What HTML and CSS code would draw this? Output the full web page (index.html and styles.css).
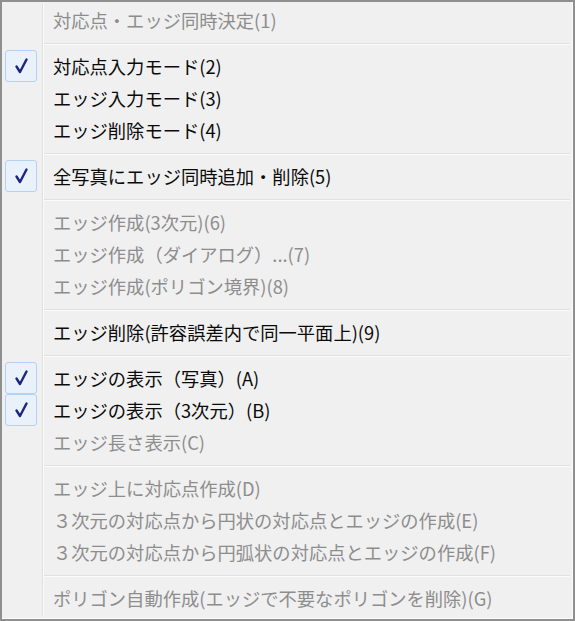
FILE: index.html
```html
<!DOCTYPE html>
<html lang="ja">
<head>
    <meta charset="UTF-8">
    <title>エッジメニュー</title>
    <link rel="stylesheet" href="styles.css">
</head>
<body>
    <div class="menu">
        <ul class="list">
            <li class="item disabled"><span class="mark"></span><span class="label">対応点・エッジ同時決定(1)</span></li>
            <li class="sep"></li>
            <li class="item"><span class="mark on"><svg viewBox="0 0 18 18"><path d="M3.5 9.5 L7 15 L13.5 2.5"/></svg></span><span class="label">対応点入力モード(2)</span></li>
            <li class="item"><span class="mark"></span><span class="label">エッジ入力モード(3)</span></li>
            <li class="item"><span class="mark"></span><span class="label">エッジ削除モード(4)</span></li>
            <li class="sep"></li>
            <li class="item"><span class="mark on"><svg viewBox="0 0 18 18"><path d="M3.5 9.5 L7 15 L13.5 2.5"/></svg></span><span class="label">全写真にエッジ同時追加・削除(5)</span></li>
            <li class="sep"></li>
            <li class="item disabled"><span class="mark"></span><span class="label">エッジ作成(3次元)(6)</span></li>
            <li class="item disabled"><span class="mark"></span><span class="label">エッジ作成（ダイアログ）...(7)</span></li>
            <li class="item disabled"><span class="mark"></span><span class="label">エッジ作成(ポリゴン境界)(8)</span></li>
            <li class="sep"></li>
            <li class="item"><span class="mark"></span><span class="label">エッジ削除(許容誤差内で同一平面上)(9)</span></li>
            <li class="sep"></li>
            <li class="item"><span class="mark on"><svg viewBox="0 0 18 18"><path d="M3.5 9.5 L7 15 L13.5 2.5"/></svg></span><span class="label">エッジの表示（写真）(A)</span></li>
            <li class="item"><span class="mark on"><svg viewBox="0 0 18 18"><path d="M3.5 9.5 L7 15 L13.5 2.5"/></svg></span><span class="label">エッジの表示（3次元）(B)</span></li>
            <li class="item disabled"><span class="mark"></span><span class="label">エッジ長さ表示(C)</span></li>
            <li class="sep"></li>
            <li class="item disabled"><span class="mark"></span><span class="label">エッジ上に対応点作成(D)</span></li>
            <li class="item disabled"><span class="mark"></span><span class="label">３次元の対応点から円状の対応点とエッジの作成(E)</span></li>
            <li class="item disabled"><span class="mark"></span><span class="label">３次元の対応点から円弧状の対応点とエッジの作成(F)</span></li>
            <li class="sep"></li>
            <li class="item disabled"><span class="mark"></span><span class="label">ポリゴン自動作成(エッジで不要なポリゴンを削除)(G)</span></li>
        </ul>
    </div>
</body>
</html>
```

FILE: styles.css
```css
html, body {
    margin: 0;
    padding: 0;
}
body {
    font-family: "Noto Sans CJK JP", "Noto Sans", sans-serif;
    font-size: 18.3px;
    color: #0a0a0a;
}
.menu {
    width: 575px;
    height: 621px;
    box-sizing: border-box;
    border: 2px solid #8f8f8f;
    box-shadow: inset -1px -1px 0 #fbfbfb;
    background: #f0f0f0;
    padding: 2px 3px 0 3px;
}
.list {
    list-style: none;
    margin: 0;
    padding: 0;
    /* 左の縦線（アイコン領域の区切り） */
    background: linear-gradient(to right, transparent 37px, #e0e0e0 37px, #e0e0e0 38px, #fbfbfb 38px, #fbfbfb 39px, transparent 39px);
    height: 612px;
}
.item {
    display: flex;
    align-items: center;
    height: 32px;
}
.item.disabled {
    color: #8d8d8d;
}
.mark {
    width: 32px;
    height: 32px;
    box-sizing: border-box;
    margin-right: 16px;
    display: flex;
    align-items: center;
    justify-content: center;
    flex-shrink: 0;
}
.mark.on {
    border: 1px solid #b4d1f3;
    border-radius: 3px;
    background: #e9f1fb;
}
.mark svg {
    width: 18px;
    height: 18px;
    margin-left: 1px;
}
.mark path {
    fill: none;
    stroke: #1d2580;
    stroke-width: 2.4;
    stroke-linecap: round;
    stroke-linejoin: round;
}
.label {
    white-space: nowrap;
    line-height: 32px;
}
.sep {
    height: 14px;
    box-sizing: border-box;
    margin-left: 39px;
    padding-top: 7px;
}
.sep::before {
    content: "";
    display: block;
    height: 1px;
    background: #e0e0e0;
    border-bottom: 1px solid #fbfbfb;
}
```
